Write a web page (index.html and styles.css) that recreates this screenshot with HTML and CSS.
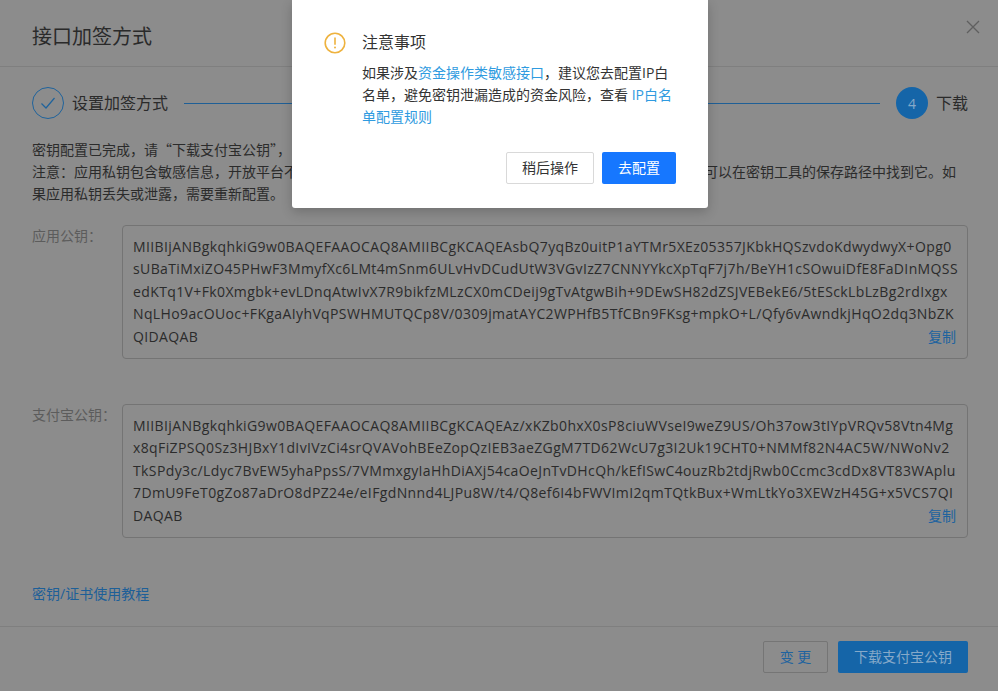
FILE: index.html
```html
<!DOCTYPE html>
<html lang="zh-CN">
<head>
<meta charset="utf-8">
<title>接口加签方式</title>
<link rel="stylesheet" href="styles.css">
</head>
<body>
<div class="page">
  <header class="head">
    <h1 class="title">接口加签方式</h1>
    <svg class="close" width="14" height="14" viewBox="0 0 14 14"><path d="M1 1l12 12M13 1L1 13" fill="none" stroke="#5f5f5f" stroke-width="1.3"/></svg>
  </header>
  <main class="body">
    <div class="steps">
      <span class="step-done"><svg width="16" height="14" viewBox="0 0 16 14"><path d="M1.5 7.5l4.5 4.5 8.5-10" fill="none" stroke="#1f639c" stroke-width="1.2"/></svg></span>
      <span class="step-text">设置加签方式</span>
      <span class="step-line"></span>
      <span class="step-now">4</span>
      <span class="step-text">下载</span>
    </div>
    <div class="notice">
      <div class="line">密钥配置已完成，请“下载支付宝公钥”，</div>
      <div class="line line-split"><span>注意：应用私钥包含敏感信息，开放平台不</span><span>可以在密钥工具的保存路径中找到它。如</span></div>
      <div class="line">果应用私钥丢失或泄露，需要重新配置。</div>
    </div>
    <section class="field field-first">
      <div class="label">应用公钥：</div>
      <div class="keybox">
        <div class="keyline">MIIBIjANBgkqhkiG9w0BAQEFAAOCAQ8AMIIBCgKCAQEAsbQ7yqBz0uitP1aYTMr5XEz05357JKbkHQSzvdoKdwydwyX+Opg0</div>
        <div class="keyline">sUBaTiMxiZO45PHwF3MmyfXc6LMt4mSnm6ULvHvDCudUtW3VGvIzZ7CNNYYkcXpTqF7j7h/BeYH1cSOwuiDfE8FaDInMQSS</div>
        <div class="keyline">edKTq1V+Fk0Xmgbk+evLDnqAtwIvX7R9bikfzMLzCX0mCDeij9gTvAtgwBih+9DEwSH82dZSJVEBekE6/5tESckLbLzBg2rdIxgx</div>
        <div class="keyline">NqLHo9acOUoc+FKgaAIyhVqPSWHMUTQCp8V/0309jmatAYC2WPHfB5TfCBn9FKsg+mpkO+L/Qfy6vAwndkjHqO2dq3NbZK</div>
        <div class="keyline last"><span>QIDAQAB</span><a class="copy">复制</a></div>
      </div>
    </section>
    <section class="field field-second">
      <div class="label">支付宝公钥：</div>
      <div class="keybox">
        <div class="keyline">MIIBIjANBgkqhkiG9w0BAQEFAAOCAQ8AMIIBCgKCAQEAz/xKZb0hxX0sP8ciuWVseI9weZ9US/Oh37ow3tIYpVRQv58Vtn4Mg</div>
        <div class="keyline">x8qFiZPSQ0Sz3HJBxY1dIvIVzCi4srQVAVohBEeZopQzIEB3aeZGgM7TD62WcU7g3I2Uk19CHT0+NMMf82N4AC5W/NWoNv2</div>
        <div class="keyline">TkSPdy3c/Ldyc7BvEW5yhaPpsS/7VMmxgyIaHhDiAXj54caOeJnTvDHcQh/kEfISwC4ouzRb2tdjRwb0Ccmc3cdDx8VT83WAplu</div>
        <div class="keyline">7DmU9FeT0gZo87aDrO8dPZ24e/eIFgdNnnd4LJPu8W/t4/Q8ef6I4bFWVImI2qmTQtkBux+WmLtkYo3XEWzH45G+x5VCS7QI</div>
        <div class="keyline last"><span>DAQAB</span><a class="copy">复制</a></div>
      </div>
    </section>
    <a class="tutorial">密钥/证书使用教程</a>
  </main>
  <footer class="foot">
    <button class="btn btn-change">变 更</button>
    <button class="btn btn-download">下载支付宝公钥</button>
  </footer>
</div>
<div class="modal">
  <div class="modal-head">
    <svg class="warn" width="22" height="22" viewBox="0 0 22 22"><circle cx="11" cy="11" r="9.8" fill="none" stroke="#eeb23e" stroke-width="1.6"/><path d="M11 5.6v7.2" stroke="#eeb23e" stroke-width="1.6" fill="none"/><circle cx="11" cy="15.6" r="1" fill="#eeb23e"/></svg>
    <span class="modal-title">注意事项</span>
  </div>
  <div class="modal-text">
    <div>如果涉及<a class="inline-link">资金操作类敏感接口</a>，建议您去配置IP白</div>
    <div>名单，避免密钥泄漏造成的资金风险，查看 <a class="inline-link">IP白名</a></div>
    <div><a class="inline-link">单配置规则</a></div>
  </div>
  <div class="modal-actions">
    <button class="mbtn mbtn-later">稍后操作</button>
    <button class="mbtn mbtn-go">去配置</button>
  </div>
</div>
</body>
</html>
```
FILE: styles.css
```css
* { box-sizing: border-box; }
html, body { margin: 0; padding: 0; }
body {
  width: 998px;
  height: 691px;
  overflow: hidden;
  position: relative;
  background: #8c8c8c;
  font-family: "Open Sans", "Noto Sans CJK SC", sans-serif;
  font-size: 14px;
  color: #262626;
}
.page { display: flex; flex-direction: column; height: 691px; }
.head {
  height: 67px;
  flex: none;
  display: flex;
  align-items: flex-start;
  justify-content: space-between;
  padding: 22px 18px 0 32px;
  border-bottom: 1px solid #7f7f7f;
}
.title { margin: 0; font-size: 20px; line-height: 30px; font-weight: 400; color: #2a2a2a; }
.close { margin-top: -2px; }
.body { flex: 1; padding: 20px 30px 0 32px; display: flex; flex-direction: column; }
.steps { display: flex; align-items: center; height: 32px; }
.step-done {
  width: 32px; height: 32px; border-radius: 50%;
  border: 1px solid #1f639c;
  display: flex; align-items: center; justify-content: center;
}
.step-text { margin-left: 8px; font-size: 16px; line-height: 32px; color: #2a2a2a; }
.step-line { flex: 1; height: 1px; background: #1f5f96; margin: 0 16px; }
.step-now {
  width: 32px; height: 32px; border-radius: 50%;
  background: #1565a8; color: #85a9c9;
  display: flex; align-items: center; justify-content: center;
  font-size: 14px;
}
.notice { margin-top: 19px; color: #2b2b2b; font-family: "Noto Sans CJK SC", sans-serif; }
.line { white-space: nowrap; line-height: 22px; }
.line-split { display: flex; justify-content: space-between; padding-right: 12px; }
.field { display: flex; }
.field-first { margin-top: 21px; }
.field-second { margin-top: 45px; }
.label { width: 90px; flex: none; color: #5c5c5c; line-height: 22px; }
.keybox {
  flex: 1;
  height: 134px;
  padding: 10px 11px 0 10px;
  border: 1px solid #747474;
  border-radius: 4px;
  color: #2b2b2b;
  overflow: hidden;
}
.keyline { white-space: nowrap; line-height: 22.4px; letter-spacing: .38px; }
.last { display: flex; justify-content: space-between; }
.copy { color: #20639f; font-size: 14px; letter-spacing: 0; }
.tutorial { margin-top: 45px; color: #1d5f98; line-height: 22px; }
.foot {
  height: 65px;
  flex: none;
  border-top: 1px solid #7f7f7f;
  display: flex;
  justify-content: flex-end;
  align-items: flex-start;
  padding: 14px 30px 0 0;
  gap: 10px;
}
.btn { height: 32px; border-radius: 2px; font: inherit; padding: 0 0 2px; }
.btn-change { width: 65px; background: transparent; border: 1px solid #757575; color: #20639f; }
.btn-download { width: 130px; background: #1565a8; border: 0; color: #85a9c9; }
.modal {
  position: absolute;
  left: 292px;
  top: 0;
  width: 416px;
  height: 208px;
  background: #fff;
  border-radius: 0 0 3px 3px;
  box-shadow: 0 4px 12px rgba(0, 0, 0, .2);
  padding: 32px 32px 0 32px;
}
.modal-head { display: flex; align-items: center; height: 22px; }
.warn { flex: none; }
.modal-title { margin-left: 16px; font-size: 16px; line-height: 20px; margin-top: -2px; color: #333; }
.modal-text { margin: 8px 0 0 38px; line-height: 22px; color: #333; white-space: nowrap; }
.inline-link { color: #2f9be0; }
.modal-actions { display: flex; justify-content: flex-end; gap: 8px; margin-top: 24px; }
.mbtn { height: 32px; border-radius: 2px; font: inherit; padding: 0 0 2px; }
.mbtn-later { width: 88px; background: #fff; border: 1px solid #d9d9d9; color: #333; }
.mbtn-go { width: 74px; background: #1677ff; border: 0; color: #fff; }
```
